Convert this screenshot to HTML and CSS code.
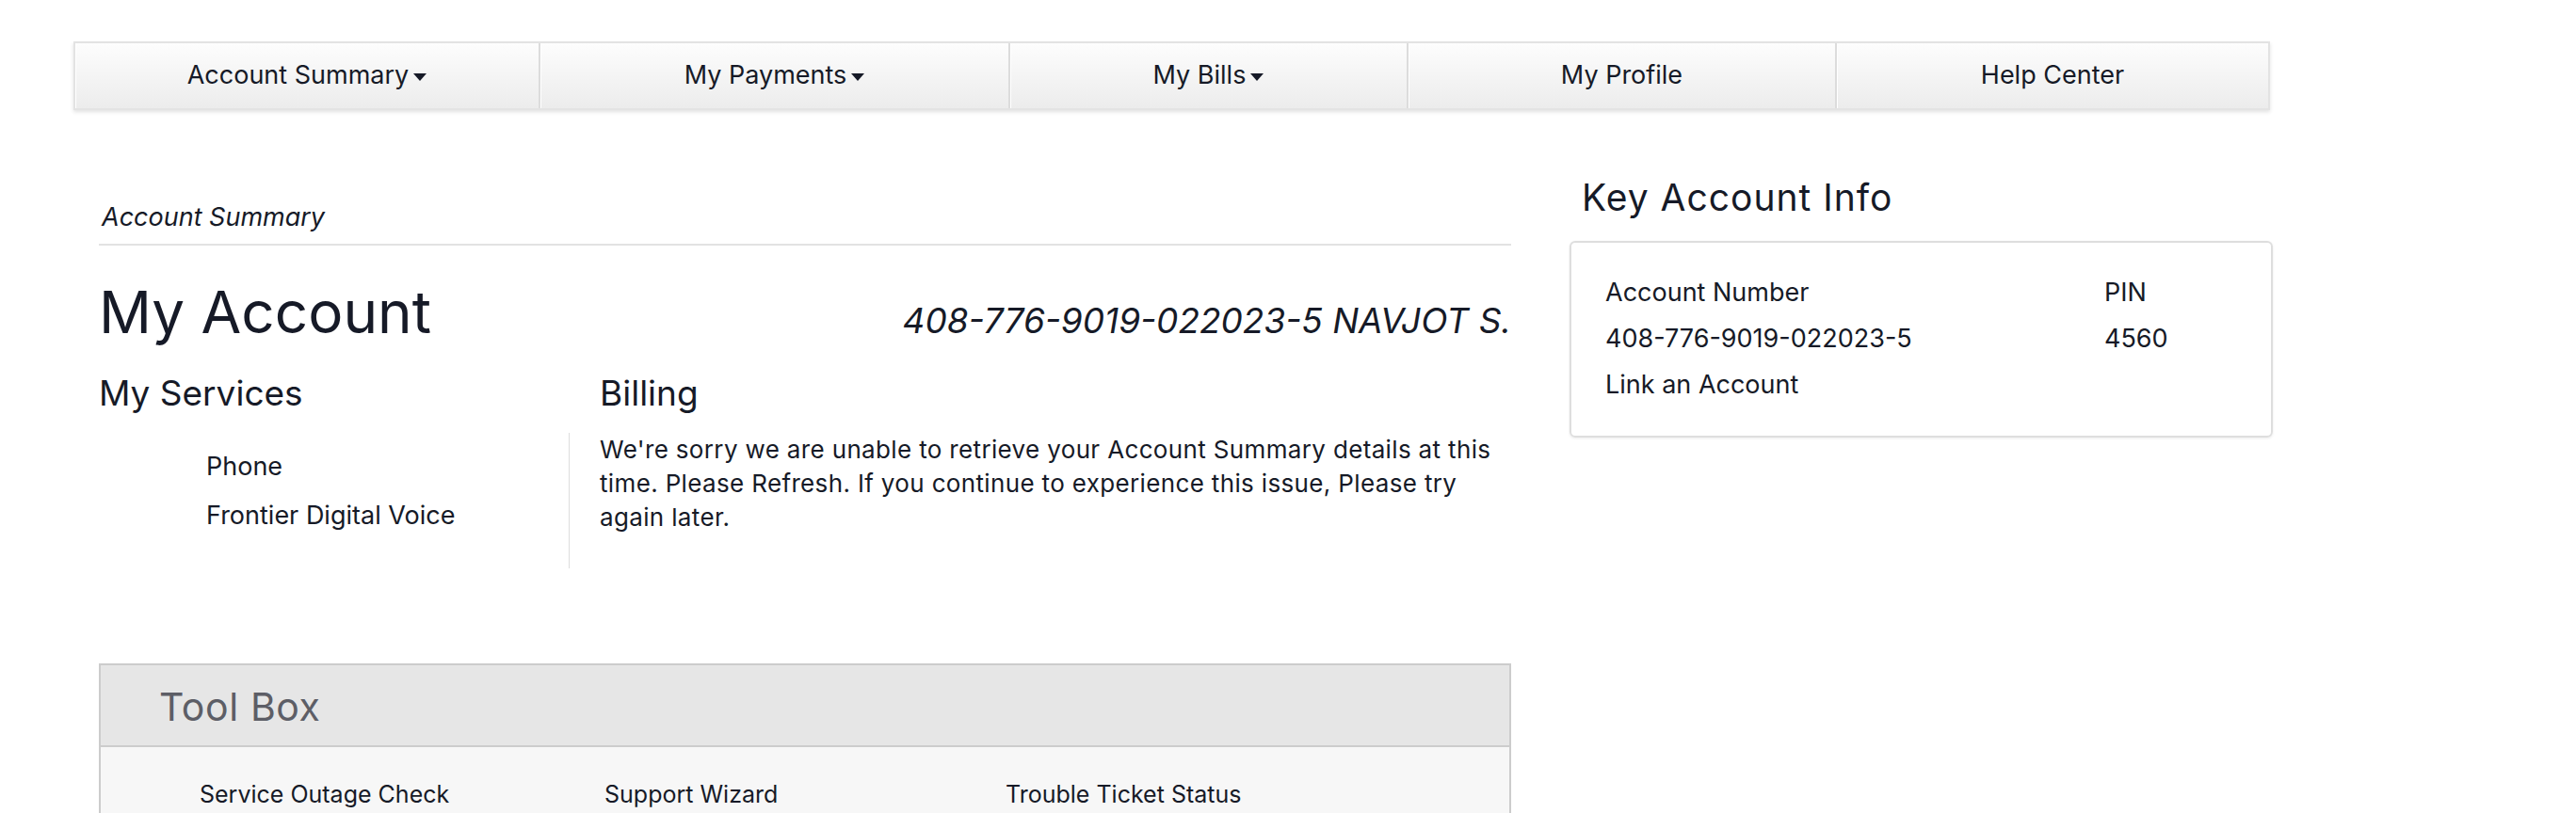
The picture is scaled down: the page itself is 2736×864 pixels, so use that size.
FILE: index.html
```html
<!DOCTYPE html>
<html lang="en">
<head>
<meta charset="utf-8">
<title>My Account</title>
<link rel="stylesheet" href="styles.css">
</head>
<body>
<div class="page">
  <nav class="topnav">
    <a class="nav-item" href="#">Account Summary<span class="caret"></span></a>
    <a class="nav-item" href="#">My Payments<span class="caret"></span></a>
    <a class="nav-item" href="#">My Bills<span class="caret"></span></a>
    <a class="nav-item" href="#">My Profile</a>
    <a class="nav-item" href="#">Help Center</a>
  </nav>
  <div class="content">
    <main class="main">
      <div class="breadcrumb">Account Summary</div>
      <div class="title-row">
        <h1 class="title">My Account</h1>
        <div class="acct-id">408-776-9019-022023-5 NAVJOT S.</div>
      </div>
      <div class="summary">
        <section class="services">
          <h2 class="section-title">My Services</h2>
          <ul class="service-list">
            <li>Phone</li>
            <li>Frontier Digital Voice</li>
          </ul>
        </section>
        <section class="billing">
          <h2 class="section-title billing-title">Billing</h2>
          <p class="billing-msg">We're sorry we are unable to retrieve your Account Summary details at this time. Please Refresh. If you continue to experience this issue, Please try again later.</p>
        </section>
      </div>
      <section class="toolbox">
        <div class="toolbox-head"><h3 class="toolbox-title">Tool Box</h3></div>
        <div class="toolbox-body">
          <a class="tool-link" href="#">Service Outage Check</a>
          <a class="tool-link" href="#">Support Wizard</a>
          <a class="tool-link" href="#">Trouble Ticket Status</a>
        </div>
      </section>
    </main>
    <aside class="key-info">
      <h2 class="key-title">Key Account Info</h2>
      <div class="key-card">
        <div>Account Number</div>
        <div>PIN</div>
        <div>408-776-9019-022023-5</div>
        <div>4560</div>
        <div>Link an Account</div>
      </div>
    </aside>
  </div>
</div>
</body>
</html>
```
FILE: styles.css
```css
* { box-sizing: border-box; }
html, body { margin: 0; padding: 0; background: #fff; }
body {
  font-family: Inter, "Liberation Sans", sans-serif;
  color: #161a27;
}
.page { padding: 44px 0 0 78px; width: 2414px; }

.topnav {
  display: grid;
  grid-template-columns: 492px 499px 423px 455px 460px;
  width: 2333px;
  height: 73px;
  border: 2px solid #e3e3e3;
  background: linear-gradient(#fdfdfd, #ececec);
  box-shadow: 0 2px 4px rgba(0, 0, 0, 0.12);
}
.nav-item {
  display: flex;
  align-items: center;
  justify-content: center;
  padding-bottom: 3px;
  font-size: 27px;
  color: inherit;
  text-decoration: none;
  border-left: 2px solid #dcdcdc;
  box-shadow: inset 1px 0 0 #ffffff;
}
.nav-item:first-child { border-left: 0; }
.caret {
  display: inline-block;
  width: 0;
  height: 0;
  border-left: 7px solid transparent;
  border-right: 7px solid transparent;
  border-top: 8px solid currentColor;
  margin-left: 5px;
  margin-top: 5px;
}

.content {
  display: grid;
  grid-template-columns: 1500px 747px;
  column-gap: 62px;
  padding-left: 27px;
}
.main { padding-top: 96px; }
.breadcrumb {
  font-size: 27px;
  font-style: italic;
  line-height: 36px;
  padding: 0 0 10px 3px;
  border-bottom: 2px solid #e2e2e2;
}
.title-row {
  display: flex;
  justify-content: space-between;
  align-items: baseline;
  margin-top: 35px;
}
.title { margin: 0; font-size: 62px; font-weight: 400; line-height: 72px; }
.acct-id { font-size: 37px; font-style: italic; }

.summary {
  display: grid;
  grid-template-columns: 499px 1fr;
  margin-top: 29px;
}
.section-title { margin: 0; font-size: 37px; font-weight: 400; line-height: 42px; }
.billing-title { padding-left: 33px; }
.service-list {
  list-style: none;
  margin: 31px 0 0;
  padding-left: 114px;
  font-size: 27px;
  line-height: 52px;
}
.billing-msg {
  margin: 21px 0 0;
  border-left: 1px solid #dddddd;
  padding: 0 0 36px 32px;
  font-size: 26px;
  line-height: 36px;
  letter-spacing: 0.35px;
}

.toolbox { margin-top: 101px; border: 2px solid #cccccc; }
.toolbox-head {
  background: #e6e6e6;
  border-bottom: 2px solid #cccccc;
  padding: 20px 0 17px 62px;
}
.toolbox-title {
  margin: 0;
  font-size: 41px;
  font-weight: 400;
  line-height: 48px;
  letter-spacing: 0.6px;
  color: #5d5e66;
}
.toolbox-body {
  background: #f7f7f7;
  display: grid;
  grid-template-columns: 430px 426px 1fr;
  padding: 35px 0 40px 105px;
  font-size: 25px;
  line-height: 30px;
}
.tool-link { color: inherit; text-decoration: none; }

.key-info { padding-top: 71px; }
.key-title {
  margin: 0;
  font-size: 39px;
  font-weight: 400;
  line-height: 44px;
  letter-spacing: 1px;
  padding-left: 13px;
}
.key-card {
  margin-top: 24px;
  border: 2px solid #dedede;
  border-radius: 6px;
  box-shadow: 0 1px 3px rgba(0, 0, 0, 0.08);
  padding: 28px 36px 30px;
  display: grid;
  grid-template-columns: 530px auto;
  font-size: 27px;
  line-height: 49px;
}
```
